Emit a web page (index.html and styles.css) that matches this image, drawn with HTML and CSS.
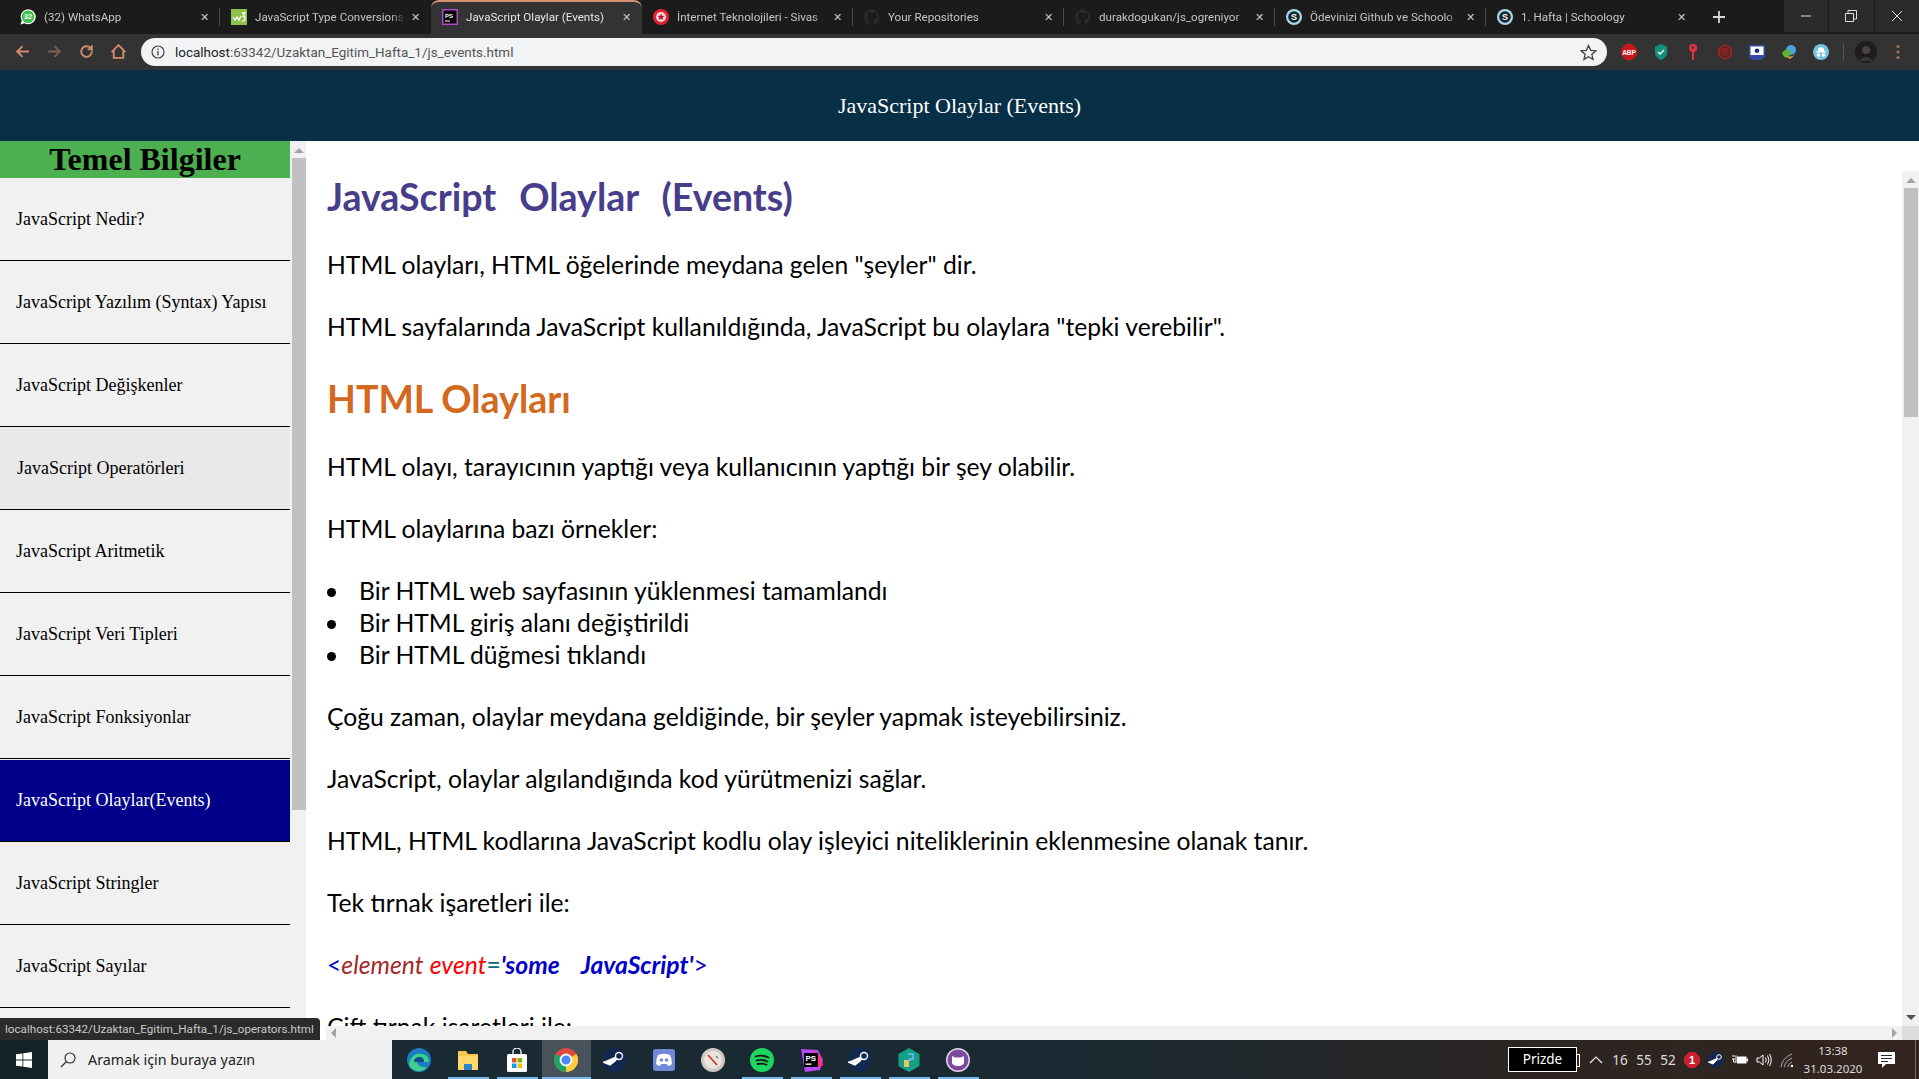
FILE: index.html
```html
<!DOCTYPE html>
<html lang="tr">
<head>
<meta charset="utf-8">
<title>JavaScript Olaylar (Events)</title>
<link rel="stylesheet" href="styles.css">
</head>
<body>
<div class="screen">
  <div class="tabstrip">
    <div class="tab sep"><svg class="fav" viewBox="0 0 16 16"><path d="M.500 15.500l1.200-4A7.500 7.500 0 1 1 4.500 14.300z" fill="#fff"/><circle cx="8" cy="7.800" r="6.300" fill="#3fbf52"/><text x="8" y="10.300" class="wa-mini">32</text></svg><span class="tab-title">(32) WhatsApp</span><span class="tab-x">✕</span></div>
    <div class="tab"><svg class="fav" viewBox="0 0 16 16"><rect width="16" height="16" fill="#8fc04c"/><path d="M2 8l2 3 2-3 2 3 2-4" fill="none" stroke="#fff" stroke-width="1.300"/><path d="M11 4h3l-2 3q2 0 2 2.500T11 12" fill="none" stroke="#fff" stroke-width="1.300"/></svg><span class="tab-title">JavaScript Type Conversions</span><span class="tab-x">✕</span></div>
    <div class="tab active"><svg class="fav" viewBox="0 0 16 16"><rect width="16" height="16" fill="#b24ac8"/><rect x="1.500" y="1.500" width="13" height="13" fill="#000"/><text x="3" y="8.500" class="ps-mini">PS</text><rect x="3" y="11.500" width="5" height="1" fill="#fff"/></svg><span class="tab-title">JavaScript Olaylar (Events)</span><span class="tab-x">✕</span></div>
    <div class="tab sep"><svg class="fav" viewBox="0 0 16 16"><circle cx="8" cy="8" r="8" fill="#e22134"/><circle cx="8" cy="8" r="5" fill="#f8d7da"/><path d="M8 4.500l1 2.300 2.500.2-1.900 1.600.6 2.400L8 9.700 5.800 11l.6-2.400L4.500 7l2.500-.2z" fill="#c8102e"/></svg><span class="tab-title">İnternet Teknolojileri - Sivas</span><span class="tab-x">✕</span></div>
    <div class="tab sep"><svg class="fav" viewBox="0 0 16 16"><path d="M8 .500a8 8 0 0 0-2.500 15.500c.4 0 .5-.2.500-.4v-2c-2.200.5-2.700-1-2.700-1-.4-.9-.9-1.200-.9-1.200-.7-.5 0-.5 0-.5.800 0 1.200.8 1.200.8.700 1.200 1.900.9 2.400.7 0-.5.300-.9.500-1.100-1.800-.2-3.600-.9-3.600-4 0-.9.300-1.600.8-2.100 0-.2-.3-1 .1-2.100 0 0 .7-.2 2.200.8a7.500 7.500 0 0 1 4 0c1.500-1 2.200-.8 2.200-.8.400 1.100.2 1.900.1 2.100.5.500.8 1.200.8 2.100 0 3.100-1.900 3.800-3.700 4 .3.300.6.700.6 1.500v2.200c0 .2.100.5.500.4A8 8 0 0 0 8 .500z" fill="#2c2c2c"/></svg><span class="tab-title">Your Repositories</span><span class="tab-x">✕</span></div>
    <div class="tab sep"><svg class="fav" viewBox="0 0 16 16"><path d="M8 .500a8 8 0 0 0-2.500 15.500c.4 0 .5-.2.500-.4v-2c-2.200.5-2.700-1-2.700-1-.4-.9-.9-1.200-.9-1.200-.7-.5 0-.5 0-.5.800 0 1.200.8 1.200.8.700 1.200 1.900.9 2.400.7 0-.5.300-.9.500-1.100-1.800-.2-3.600-.9-3.600-4 0-.9.300-1.600.8-2.100 0-.2-.3-1 .1-2.100 0 0 .7-.2 2.200.8a7.500 7.500 0 0 1 4 0c1.500-1 2.200-.8 2.200-.8.400 1.100.2 1.900.1 2.100.5.500.8 1.200.8 2.100 0 3.100-1.900 3.800-3.700 4 .3.300.6.700.6 1.500v2.200c0 .2.100.5.500.4A8 8 0 0 0 8 .500z" fill="#2c2c2c"/></svg><span class="tab-title">durakdogukan/js_ogreniyor</span><span class="tab-x">✕</span></div>
    <div class="tab sep"><svg class="fav" viewBox="0 0 16 16"><circle cx="8" cy="8" r="8" fill="#a9d8ea"/><circle cx="8" cy="8" r="5.800" fill="#17252e"/><text x="8" y="11.200" class="s-mini">S</text></svg><span class="tab-title">Ödevinizi Github ve Schoolo</span><span class="tab-x">✕</span></div>
    <div class="tab"><svg class="fav" viewBox="0 0 16 16"><circle cx="8" cy="8" r="8" fill="#a9d8ea"/><circle cx="8" cy="8" r="5.800" fill="#17252e"/><text x="8" y="11.200" class="s-mini">S</text></svg><span class="tab-title">1. Hafta | Schoology</span><span class="tab-x">✕</span></div>
    <svg class="newtab" viewBox="0 0 14 14"><path d="M7 1v12M1 7h12" stroke="#d8d8d8" stroke-width="1.800"/></svg>
    <div class="winbtns">
      <div class="winbtn"><svg viewBox="0 0 12 12"><path d="M1 6h10" stroke="#e0e0e0"/></svg></div>
      <div class="winbtn"><svg viewBox="0 0 12 12"><path d="M.500 3.500h8v8h-8zM3 3.500V.500h8.500V9h-3" fill="none" stroke="#e0e0e0"/></svg></div>
      <div class="winbtn"><svg viewBox="0 0 12 12"><path d="M1 1l10 10M11 1L1 11" stroke="#e0e0e0"/></svg></div>
    </div>
  </div>

  <div class="toolbar">
    <svg class="nav" viewBox="0 0 16 16"><path d="M14 8H3M8 3L3 8l5 5" fill="none" stroke="#d08d6c" stroke-width="1.800"/></svg>
    <svg class="nav" viewBox="0 0 16 16"><path d="M2 8h11M8 3l5 5-5 5" fill="none" stroke="#7d5f50" stroke-width="1.800"/></svg>
    <svg class="nav" viewBox="0 0 16 16"><path d="M13 8a5 5 0 1 1-1.500-3.500L13 6V2M13 6H9" fill="none" stroke="#d08d6c" stroke-width="1.800"/></svg>
    <svg class="nav" viewBox="0 0 16 16"><path d="M1.500 8.500L8 2l6.500 6.500M3.500 7v7h9V7" fill="none" stroke="#d08d6c" stroke-width="1.700"/></svg>
    <div class="omnibox">
      <svg class="info" viewBox="0 0 14 14"><circle cx="7" cy="7" r="6" fill="none" stroke="#444" stroke-width="1.200"/><path d="M7 6v4.500M7 3.500v1.500" stroke="#444" stroke-width="1.300"/></svg>
      <span class="url"><span class="url-host">localhost</span>:63342/Uzaktan_Egitim_Hafta_1/js_events.html</span>
      <svg class="star" viewBox="0 0 16 16"><path d="M8 1.500l2 4.500 4.800.5-3.600 3.200 1 4.800L8 12l-4.200 2.500 1-4.800L1.200 6.500 6 6z" fill="none" stroke="#444" stroke-width="1.300"/></svg>
    </div>
    <div class="exts">
      <svg class="ext" viewBox="0 0 16 16"><path d="M5 0h6l5 5v6l-5 5H5l-5-5V5z" fill="#c8161d"/><text x="8" y="10.500" class="abp">ABP</text></svg>
      <svg class="ext" viewBox="0 0 16 16"><path d="M8 0l6 2.500V9c0 3-3 5.500-6 7-3-1.500-6-4-6-7V2.500z" fill="#12907b"/><path d="M5 8l2 2 4-4" fill="none" stroke="#fff" stroke-width="1.300"/></svg>
      <svg class="ext" viewBox="0 0 16 16"><circle cx="8" cy="4" r="4" fill="#e0343f"/><rect x="7" y="6" width="2" height="10" fill="#e0343f"/><circle cx="8" cy="3.500" r="1.300" fill="#333"/></svg>
      <svg class="ext" viewBox="0 0 16 16"><path d="M8 0l7 4v8l-7 4-7-4V4z" fill="#a81c1c"/><path d="M8 2.500L12.500 5v6L8 13.500 3.500 11V5zM6 5.500v5h2M9 5.500v5l1.500-1.500 1.500 1.500" fill="none" stroke="#333" stroke-width="1.100"/></svg>
      <svg class="ext" viewBox="0 0 16 16"><path d="M0 1h16v12l-4 3H4l-4-3z" fill="#3449a8"/><rect x="1.500" y="2.500" width="13" height="8.500" fill="#fff"/><circle cx="8" cy="6.800" r="2.300" fill="#1b2a7a"/></svg>
      <svg class="ext" viewBox="0 0 16 16"><circle cx="10" cy="6" r="5" fill="#4aa3df"/><path d="M1 9q4-6 9-2l-2 6q-5 2-7-4z" fill="#5fb233"/><path d="M5 12q4 2 9-1l-5 4z" fill="#e8a33d"/></svg>
      <svg class="ext" viewBox="0 0 16 16"><circle cx="8" cy="8" r="8" fill="#74c5dc"/><path d="M3 8h10M5 8l1-4h4l1 4" fill="#fff" stroke="#fff"/><circle cx="5.500" cy="11" r="1.800" fill="#fff"/><circle cx="10.500" cy="11" r="1.800" fill="#fff"/></svg>
      <span class="ext-sep"></span>
      <svg class="avatar" viewBox="0 0 22 22"><circle cx="11" cy="11" r="11" fill="#1d1d1d"/><circle cx="11" cy="9" r="4" fill="#4a4240"/><path d="M4 20q7-8 14 0" fill="#3a3533"/></svg>
      <svg class="kebab" viewBox="0 0 4 16"><circle cx="2" cy="2.500" r="1.500" fill="#a9755c"/><circle cx="2" cy="8" r="1.500" fill="#a9755c"/><circle cx="2" cy="13.500" r="1.500" fill="#a9755c"/></svg>
    </div>
  </div>

  <div class="page">
    <header class="page-head">JavaScript Olaylar (Events)</header>
    <div class="page-body">
      <aside class="side">
        <div class="side-col">
          <h2 class="side-title">Temel Bilgiler</h2>
          <a class="side-link">JavaScript Nedir?</a>
          <a class="side-link">JavaScript Yazılım (Syntax) Yapısı</a>
          <a class="side-link">JavaScript Değişkenler</a>
          <a class="side-link hover">JavaScript Operatörleri</a>
          <a class="side-link">JavaScript Aritmetik</a>
          <a class="side-link">JavaScript Veri Tipleri</a>
          <a class="side-link">JavaScript Fonksiyonlar</a>
          <a class="side-link current">JavaScript Olaylar(Events)</a>
          <a class="side-link">JavaScript Stringler</a>
          <a class="side-link">JavaScript Sayılar</a>
        </div>
        <div class="side-scroll">
          <span class="arrow-up"></span>
          <span class="side-thumb"></span>
        </div>
      </aside>
      <main class="main">
        <div class="main-view">
          <article class="article">
            <h1 class="title">JavaScript Olaylar (Events)</h1>
            <p>HTML olayları, HTML öğelerinde meydana gelen "şeyler" dir.</p>
            <p>HTML sayfalarında JavaScript kullanıldığında, JavaScript bu olaylara "tepki verebilir".</p>
            <h2 class="subtitle">HTML Olayları</h2>
            <p>HTML olayı, tarayıcının yaptığı veya kullanıcının yaptığı bir şey olabilir.</p>
            <p>HTML olaylarına bazı örnekler:</p>
            <ul>
              <li>Bir HTML web sayfasının yüklenmesi tamamlandı</li>
              <li>Bir HTML giriş alanı değiştirildi</li>
              <li>Bir HTML düğmesi tıklandı</li>
            </ul>
            <p>Çoğu zaman, olaylar meydana geldiğinde, bir şeyler yapmak isteyebilirsiniz.</p>
            <p>JavaScript, olaylar algılandığında kod yürütmenizi sağlar.</p>
            <p>HTML, HTML kodlarına JavaScript kodlu olay işleyici niteliklerinin eklenmesine olanak tanır.</p>
            <p>Tek tırnak işaretleri ile:</p>
            <p class="code"><span class="c-tag">&lt;</span><i class="c-el">element</i> <i class="c-attr">event</i><span class="c-eq">=</span><b class="c-val">'some JavaScript'</b><span class="c-tag">&gt;</span></p>
            <p>Çift tırnak işaretleri ile:</p>
          </article>
          <div class="main-scroll">
            <span class="arrow-up"></span>
            <span class="main-thumb"></span>
            <span class="arrow-down"></span>
          </div>
        </div>
        <div class="hscroll">
          <div class="hbar">
            <span class="arrow-left"></span>
            <span class="arrow-right"></span>
          </div>
          <div class="hcorner"></div>
        </div>
      </main>
    </div>
    <div class="status">localhost:63342/Uzaktan_Egitim_Hafta_1/js_operators.html</div>
  </div>

  <footer class="taskbar">
    <div class="start"><svg viewBox="0 0 16 16"><path d="M0 2.300l6.500-.9v6.200H0zM7.300 1.300L16 0v7.600H7.300zM0 8.400h6.500v6.200L0 13.700zM7.300 8.400H16V16l-8.700-1.300z" fill="#fff"/></svg></div>
    <div class="search"><svg viewBox="0 0 16 16"><circle cx="10" cy="6" r="5" fill="none" stroke="#222" stroke-width="1.100"/><path d="M6.500 9.500L1 15" stroke="#222" stroke-width="1.100"/></svg><span>Aramak için buraya yazın</span></div>
    <div class="apps">
      <div class="app"><svg viewBox="0 0 24 24"><circle cx="12" cy="12" r="12" fill="#1b7cc4"/><path d="M2 15Q6 3 16 6q6 2 6 8H10q1 5 7 5l3 1q-5 4-10 3Q2 21 2 15z" fill="#3ecf8e"/><path d="M7 14q0-5 6-5 4 0 4 5z" fill="#124c8a"/></svg></div>
      <div class="app on"><svg viewBox="0 0 24 24"><path d="M2 3h8l2 3h10v16H2z" fill="#f5c84c"/><rect x="2" y="8" width="20" height="14" fill="#ffd96a"/><rect x="8" y="16" width="8" height="6" fill="#2e86c8"/></svg></div>
      <div class="app on"><svg viewBox="0 0 24 24"><path d="M8 7V4a4 4 0 0 1 8 0v3" fill="none" stroke="#eee" stroke-width="1.400"/><rect x="2" y="6" width="20" height="18" rx="1.500" fill="#fff"/><rect x="7" y="10" width="4.500" height="4.500" fill="#f25022"/><rect x="12.500" y="10" width="4.500" height="4.500" fill="#7fba00"/><rect x="7" y="15.500" width="4.500" height="4.500" fill="#00a4ef"/><rect x="12.500" y="15.500" width="4.500" height="4.500" fill="#ffb900"/></svg></div>
      <div class="app on sel"><svg viewBox="0 0 24 24"><circle cx="12" cy="12" r="12" fill="#dd4b3e"/><path d="M12 12L22.400 6A12 12 0 0 1 12 24z" fill="#ffcd40"/><path d="M12 12L12 24A12 12 0 0 1 1.600 6z" fill="#1fa463"/><circle cx="12" cy="12" r="5.500" fill="#4a8af4" stroke="#fff" stroke-width="1.800"/></svg></div>
      <div class="app"><svg viewBox="0 0 24 24"><circle cx="12" cy="12" r="12" fill="#12284e"/><path d="M0 14l7 3 5-4 4-6" fill="#fff" stroke="#fff" stroke-width="1.500"/><circle cx="16" cy="8" r="3.500" fill="#12284e" stroke="#fff" stroke-width="1.400"/></svg></div>
      <div class="app"><svg viewBox="0 0 24 24"><rect x="1" y="1" width="22" height="22" rx="3" fill="#7289da"/><path d="M6 7q6-2.500 12 0 2 4 2 9-2 2-4 2l-1-2H9l-1 2q-2 0-4-2 0-5 2-9z" fill="#fff"/><circle cx="9.500" cy="12" r="1.800" fill="#7289da"/><circle cx="14.500" cy="12" r="1.800" fill="#7289da"/></svg></div>
      <div class="app"><svg viewBox="0 0 24 24"><circle cx="12" cy="12" r="12" fill="#cfc9c4"/><circle cx="12" cy="12" r="9" fill="#e9e4df"/><path d="M7 7l9 10" stroke="#d4362c" stroke-width="1.800"/><path d="M15 8l2 2" stroke="#777" stroke-width="1.200"/></svg></div>
      <div class="app on"><svg viewBox="0 0 24 24"><circle cx="12" cy="12" r="12" fill="#1ed760"/><path d="M5.500 8.500q7-2 13 1M6.500 12.500q6-1.500 11 1M7.500 16q5-1 9 .8" fill="none" stroke="#181818" stroke-width="1.800" stroke-linecap="round"/></svg></div>
      <div class="app on"><svg viewBox="0 0 24 24"><path d="M2 1l17 1 5 10-3 10-15 2z" fill="#b74af7"/><path d="M14 2l8 6 2 9-5 3z" fill="#ff318c"/><rect x="5" y="5" width="14" height="14" fill="#000"/><text x="6.500" y="12.500" class="ps-app">PS</text><rect x="6.500" y="15.500" width="6" height="1.300" fill="#fff"/></svg></div>
      <div class="app on"><svg viewBox="0 0 24 24"><circle cx="12" cy="12" r="12" fill="#12284e"/><path d="M0 14l7 3 5-4 4-6" fill="#fff" stroke="#fff" stroke-width="1.500"/><circle cx="16" cy="8" r="3.500" fill="#12284e" stroke="#fff" stroke-width="1.400"/></svg></div>
      <div class="app on"><svg viewBox="0 0 24 24"><path d="M12 0l10.500 6v12L12 24 1.500 18V6z" fill="#14a085"/><rect x="7" y="12" width="5" height="7" fill="#e8c469"/><path d="M11 6h5v5h-3v2" fill="none" stroke="#5fb3e8" stroke-width="2"/></svg></div>
      <div class="app on"><svg viewBox="0 0 24 24"><circle cx="12" cy="12" r="12" fill="#e3d5ec"/><circle cx="12" cy="12" r="10.500" fill="#7a4a9e"/><path d="M6 8l3 1.500h6L18 8v7q-1 3-6 3t-6-3z" fill="#fff"/></svg></div>
    </div>
    <div class="tray">
      <div class="prizde"><span>Prizde</span></div>
      <div class="tray-cell"><svg class="chev" viewBox="0 0 14 8"><path d="M1 7l6-6 6 6" fill="none" stroke="#eee" stroke-width="1.200"/></svg></div>
      <div class="tray-cell">16</div>
      <div class="tray-cell">55</div>
      <div class="tray-cell">52</div>
      <div class="tray-cell"><svg class="tray-ic" viewBox="0 0 16 16"><path d="M5 0h6l5 5v6l-5 5H5l-5-5V5z" fill="#c8202d"/><text x="8" y="12" class="badge">1</text></svg></div>
      <div class="tray-cell"><svg class="tray-ic" viewBox="0 0 16 16"><circle cx="8" cy="8" r="8" fill="#12284e"/><path d="M0 10l5 2 3-3 3-4" fill="#fff" stroke="#fff"/><circle cx="11" cy="5" r="2.300" fill="#12284e" stroke="#fff"/></svg></div>
      <div class="tray-cell"><svg class="tray-ic" viewBox="0 0 16 16"><path d="M0 4h3M0 7h3M1.500 7v3H4M4 3.500v7" fill="none" stroke="#fff"/><rect x="5" y="4.500" width="9.500" height="7" fill="#fff"/><rect x="14.500" y="6.500" width="1.500" height="3" fill="#fff"/></svg></div>
      <div class="tray-cell"><svg class="tray-ic" viewBox="0 0 16 16"><path d="M1 6v4h2.500L7 13V3L3.500 6z" fill="none" stroke="#fff"/><path d="M9.500 5.500q1.500 2.500 0 5M11.500 3.500q3 4.500 0 9M13.500 2q3.500 6 0 12" fill="none" stroke="#fff"/></svg></div>
      <div class="tray-cell"><svg class="tray-ic" viewBox="0 0 16 16"><path d="M1 15Q2 6 12 2M4.500 15Q5 9 12 6M8 15q0-3 4-5" fill="none" stroke="#aaa"/><circle cx="12" cy="14" r="1.200" fill="#fff"/></svg></div>
      <div class="clock"><span>13:38</span><span>31.03.2020</span></div>
      <svg class="notif" viewBox="0 0 18 18"><path d="M0 1h17v12H8l-4 4v-4H0z" fill="#fff"/><path d="M3 4.500h11M3 7.500h11M3 10.500h7" stroke="#2b2523"/></svg>
      <div class="peek"></div>
    </div>
  </footer>
</div>
</body>
</html>
```
FILE: styles.css
```css
* { box-sizing: border-box; }
html, body { margin: 0; height: 100%; overflow: hidden; }
.screen { width: 1919px; height: 1079px; display: flex; flex-direction: column; overflow: hidden; background: #fff; }

.tabstrip { height: 34px; flex: none; display: flex; align-items: stretch; padding-left: 9px; background: #1b1b1b; font: 11.600px "Roboto", "Noto Sans", sans-serif; color: #c6c6c6; }
.tab { width: 211px; flex: none; display: flex; align-items: center; padding: 0 9px 0 11px; position: relative; }
.tab.sep::after { content: ""; position: absolute; right: 0; top: 8px; bottom: 8px; width: 1px; background: #4a4a4a; }
.tab.active { background: #333; border-top: 2px solid #d9926f; border-radius: 8px 8px 0 0; color: #e8e8e8; padding-bottom: 2px; }
.fav { width: 16px; height: 16px; flex: none; }
.tab-title { margin-left: 8px; flex: 1; min-width: 0; overflow: hidden; white-space: nowrap; -webkit-mask-image: linear-gradient(to right, #000 90%, transparent); mask-image: linear-gradient(to right, #000 90%, transparent); }
.tab-x { width: 14px; flex: none; text-align: center; font-size: 11px; margin-left: 2px; color: #c8c8c8; }
.wa-mini { font: bold 7px "Liberation Sans", sans-serif; fill: #fff; text-anchor: middle; }
.ps-mini { font: bold 6px "Liberation Sans", sans-serif; fill: #fff; }
.s-mini { font: bold 9px "Liberation Sans", sans-serif; fill: #fff; text-anchor: middle; }
.newtab { width: 14px; height: 14px; align-self: center; margin-left: 15px; }
.winbtns { margin-left: auto; display: flex; height: 32px; }
.winbtn { width: 45.500px; display: flex; align-items: center; justify-content: center; background: #2b2b2b; border-left: 1px solid #1b1b1b; }
.winbtn svg { width: 12px; height: 12px; }

.toolbar { height: 36px; flex: none; display: flex; align-items: flex-start; background: #333; padding: 4px 0 0 14px; }
.nav { width: 17px; height: 17px; margin: 5px 15px 0 0; flex: none; }
.omnibox { width: 1466px; height: 28px; margin-left: -1px; border-radius: 14px; background: #f1f3f4; display: flex; align-items: center; padding: 0 10px; font: 13.450px "Roboto", "Noto Sans", sans-serif; color: #555; }
.info { width: 14px; height: 14px; flex: none; }
.url { margin-left: 10px; flex: 1; white-space: nowrap; }
.url-host { color: #222; }
.star { width: 17px; height: 17px; }
.exts { flex: 1; display: flex; align-items: center; height: 28px; padding-left: 14px; }
.ext { width: 16px; height: 16px; margin-right: 16px; flex: none; }
.abp { font: bold 6.500px "Liberation Sans", sans-serif; fill: #fff; text-anchor: middle; }
.ext-sep { width: 1px; height: 18px; background: #555; margin-left: -2px; margin-right: 11px; }
.avatar { width: 22px; height: 22px; margin-right: 19px; }
.kebab { width: 4px; height: 16px; }

.page { flex: 1; min-height: 0; display: flex; flex-direction: column; position: relative; }
.page-head { height: 71px; flex: none; background: #073047; color: #fff; display: flex; align-items: center; justify-content: center; font: 22px "Liberation Serif", serif; }
.page-body { flex: 1; min-height: 0; display: flex; }

.side { width: 306px; flex: none; display: flex; background: #f1f1f1; overflow: hidden; }
.side-col { width: 290px; flex: none; }
.side-title { margin: 0; height: 37px; background: #4caf50; color: #000; text-align: center; font: bold 32px/37px "Liberation Serif", serif; }
.side-link { display: flex; align-items: center; height: 83px; padding-left: 16px; padding-top: 1px; border-bottom: 1px solid #000; font: 18px "Liberation Serif", serif; color: #000; }
.side-link.hover { background: #e9e9e9; padding-left: 17px; }
.side-link.current { background: #00008b; color: #fff; border-top: 1px solid #f1f1f1; padding-top: 0; }
.side-scroll { width: 14px; margin-left: 2px; display: flex; flex-direction: column; align-items: center; padding-top: 7px; }
.arrow-up { width: 0; height: 0; flex: none; border: 5px solid transparent; border-top: 0; border-bottom-color: #a3a3a3; }
.arrow-down { width: 0; height: 0; flex: none; border: 5px solid transparent; border-bottom: 0; border-top-color: #505050; }
.arrow-left { width: 0; height: 0; border: 5px solid transparent; border-left: 0; border-right-color: #a3a3a3; }
.arrow-right { width: 0; height: 0; border: 5px solid transparent; border-right: 0; border-left-color: #a3a3a3; }
.side-thumb { width: 14px; height: 652px; background: #c1c1c1; margin-top: 5px; flex: none; }

.main { flex: 1; min-width: 0; display: flex; flex-direction: column; position: relative; }
.main-view { flex: 1; min-height: 0; display: flex; }
.article { flex: 1; min-width: 0; overflow: hidden; padding: 30px 0 0 21px; font: 24.700px/32px "Lato", "Open Sans", sans-serif; color: #000; }
.article p { margin: 0 0 30px; white-space: nowrap; }
.title { margin: 0 0 26px; font: bold 37.500px/52px "Lato", sans-serif; word-spacing: 14px; color: #483d8b; }
.subtitle { margin: 0 0 26px; font: bold 37.500px/52px "Lato", sans-serif; color: #d2691e; }
.article ul { margin: 0 0 30px; padding: 0 0 0 32px; list-style: none; }
.article li::before { content: ""; display: inline-block; width: 9px; height: 9px; border-radius: 50%; background: #000; margin-left: -32px; margin-right: 23px; vertical-align: 3px; }
.c-tag { color: #0000cd; }
.c-el { color: #a52a2a; }
.c-attr { color: #f00; }
.c-val { color: #0000cd; font-style: italic; word-spacing: 16px; }
.c-eq { color: #0a6a72; }
.main-scroll { width: 17px; flex: none; margin-top: 30px; background: #f1f1f1; display: flex; flex-direction: column; align-items: center; padding: 7px 0 6px; }
.main-thumb { width: 14px; height: 229px; margin-top: 5px; background: #c1c1c1; flex: none; }
.main-scroll .arrow-down { margin-top: auto; }
.hscroll { height: 14px; flex: none; margin-left: 20px; display: flex; }
.hbar { flex: 1; background: #f1f1f1; display: flex; align-items: center; justify-content: space-between; padding: 0 5px 0 5px; }
.hcorner { width: 17px; flex: none; background: #dcdcdc; }
.status { position: absolute; left: 0; bottom: 0; height: 22px; width: 320px; padding: 0 0 0 5px; background: #2b2b2b; border-top-right-radius: 4px; color: #c9c9c9; font: 11.650px/22px "Roboto", "Noto Sans", sans-serif; white-space: nowrap; overflow: hidden; }

.taskbar { height: 39px; flex: none; display: flex; align-items: stretch; background: linear-gradient(to right, #1a2a33 0%, #1a2a33 55%, #2c2522 80%, #33241f 100%); color: #fff; }
.start { width: 48px; display: flex; align-items: center; justify-content: center; background: #15222a; }
.start svg { width: 16px; height: 16px; }
.search { width: 344px; background: #f0f0f0; color: #222; display: flex; align-items: center; padding-left: 12px; gap: 12px; font: 14.300px "Noto Sans", sans-serif; }
.search svg { width: 16px; height: 16px; }
.apps { display: flex; padding-left: 2.500px; }
.app { width: 49px; display: flex; align-items: center; justify-content: center; position: relative; }
.app svg { width: 24px; height: 24px; }
.app.on::after { content: ""; position: absolute; left: 4px; right: 4px; bottom: 0; height: 2px; background: #76b9ed; }
.app.sel { background: #47525a; }
.app.sel::after { left: 0; right: 0; }
.ps-app { font: bold 8px "Liberation Sans", sans-serif; fill: #fff; }
.tray { margin-left: auto; display: flex; align-items: center; font: 13.500px "Noto Sans", sans-serif; }
.prizde { width: 69px; height: 25px; margin-right: 7px; background: #000; border: 1px solid #fff; text-align: center; line-height: 22px; color: #fff; position: relative; }
.prizde::after { content: ""; position: absolute; right: -4px; top: 6px; width: 3px; height: 11px; border: 1px solid #fff; border-left: 0; }
.tray-cell { width: 24px; display: flex; align-items: center; justify-content: center; color: #ddd; }
.chev { width: 14px; height: 8px; }
.tray-ic { width: 16px; height: 16px; }
.badge { font: bold 11px "Liberation Sans", sans-serif; fill: #fff; text-anchor: middle; }
.clock { width: 66px; display: flex; flex-direction: column; align-items: center; font-size: 11.500px; line-height: 18px; color: #ddd; }
.notif { width: 18px; height: 18px; margin-left: 12px; margin-right: 19px; }
.peek { width: 4px; height: 39px; border-left: 1px solid #7a6a63; }
```
